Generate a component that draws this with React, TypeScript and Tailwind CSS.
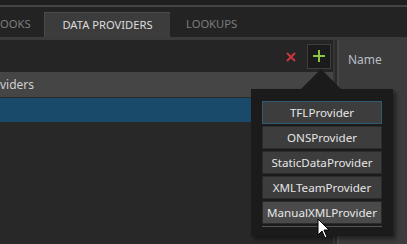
import React from 'react';

const providers = ['TFLProvider', 'ONSProvider', 'StaticDataProvider', 'XMLTeamProvider', 'ManualXMLProvider'];

const ProviderButton: React.FC<{ name: string; index: number }> = ({ name, index }) => {
    const first = index === 0;
    const hover = index === providers.length - 1;
    return (
        <button
            className={`h-[23px] w-full text-[11.6px] leading-none text-[#e6e6e6] border ${first ? 'border-[#2f5c74]' : 'border-[#2b2b2b]'} ${hover ? 'bg-[#4a4a4a]' : 'bg-[#3d3d3d]'}`}
        >
            {name}
        </button>
    );
};

export default function App() {
    return (
        <div className="relative w-[407px] h-[244px] overflow-hidden bg-[#282828] font-['Noto_Sans',sans-serif] select-none">
            {/* title strip */}
            <div className="h-[5px] bg-[#1f1f1f]" />
            <div className="h-[2px] bg-[#444]" />

            {/* tabs */}
            <div className="h-[30px] bg-[#232323] flex items-end">
                <div className="w-[44px] h-[25px] flex items-center">
                    <span className="text-[11.2px] text-[#7c7c7c]">OOKS</span>
                </div>
                <div className="w-[126px] h-[25px] bg-[#3c3c3c] border-l border-t border-[#4a4a4a] flex items-center justify-center">
                    <span className="text-[11.2px] text-[#dcdcdc]">DATA PROVIDERS</span>
                </div>
                <div className="h-[25px] flex items-center pl-[16px]">
                    <span className="text-[11.2px] text-[#7c7c7c]">LOOKUPS</span>
                </div>
            </div>
            <div className="h-[3px] bg-[#3b3b3b]" />

            <div className="flex h-[204px]">
                {/* left panel */}
                <div className="w-[335px] flex flex-col border-r-2 border-[#363636]">
                    <div className="h-[32px] bg-[#252525] flex items-center justify-end gap-[8px] pr-[2px]">
                        <svg width="10" height="10" viewBox="0 0 10 10" className="mt-[2px] mr-[3px]">
                            <path d="M1 1 L9 9 M9 1 L1 9" stroke="#c9363c" strokeWidth="2" />
                        </svg>
                        <div className="w-[24px] h-[25px] bg-[#1b1b1b] border border-[#3d3d3d] flex items-center justify-center">
                            <svg width="12" height="12" viewBox="0 0 12 12">
                                <path d="M6 0 V12 M0 6 H12" stroke="#8cc63e" strokeWidth="2" />
                            </svg>
                        </div>
                    </div>
                    <div className="h-[25px] bg-[#454545] flex items-center">
                        <span className="text-[12px] text-[#cfcfcf]">viders</span>
                    </div>
                    <div className="h-[1px] bg-[#2a2a2a]" />
                    <div className="h-[24px] bg-[#1a4a6a]" />
                    <div className="flex-1 bg-[#282828]" />
                </div>

                {/* divider */}
                <div className="w-[4px] bg-[#2a2a2a] border-r-2 border-[#474747]" />

                {/* right panel */}
                <div className="flex-1 bg-[#3c3c3c] pl-[9px] pt-[6px]">
                    <span className="text-[12px] text-[#b9bec4]">Name</span>
                </div>
            </div>

            {/* popup */}
            <div className="absolute left-[251px] top-[89px] w-[142px] h-[147px] bg-[#1b1b1b] shadow-[3px_3px_4px_rgba(0,0,0,0.45)] px-[11px] pt-[12px]">
                <div className="absolute left-[50px] -top-[20px] w-0 h-0 border-l-[20px] border-r-[20px] border-b-[20px] border-l-transparent border-r-transparent border-b-[#1b1b1b]" />
                <div className="flex flex-col gap-[2px]">
                    {providers.map((p, i) => (
                        <ProviderButton key={p} name={p} index={i} />
                    ))}
                </div>
                <div className="mt-[2px] h-[1px] bg-[#555]" />
            </div>

            {/* mouse cursor */}
            <svg className="absolute left-[317px] top-[218px]" width="14" height="22" viewBox="0 0 14 22">
                <path d="M1 1 L1 17 L5 13 L8 20 L10 19 L7 12 L12 12 Z" fill="#fff" stroke="#000" strokeWidth="1" />
            </svg>
        </div>
    );
}
